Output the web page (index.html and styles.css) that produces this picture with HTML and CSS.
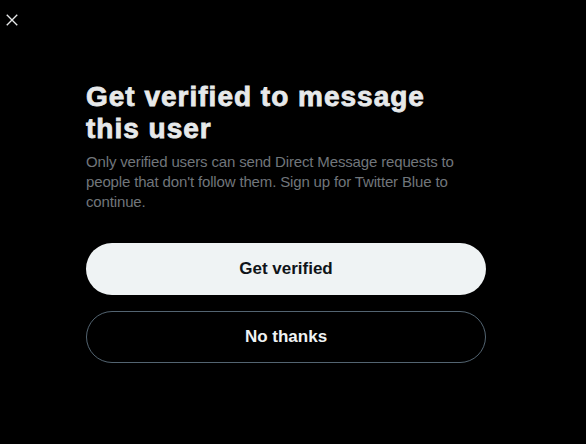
FILE: index.html
```html
<!DOCTYPE html>
<html>
<head>
<meta charset="utf-8">
<link rel="stylesheet" href="styles.css">
</head>
<body>
<div class="modal">
  <div class="topbar">
    <button class="close" aria-label="Close">
      <svg viewBox="0 0 24 24" width="14" height="14"><path d="M3 3 L21 21 M21 3 L3 21" stroke="#e7e9ea" stroke-width="2.4" fill="none"/></svg>
    </button>
  </div>
  <div class="content">
    <h1 class="title">Get verified to message this user</h1>
    <p class="desc">Only verified users can send Direct Message requests to people that don't follow them. Sign up for Twitter Blue to continue.</p>
    <div class="actions">
      <button class="btn primary">Get verified</button>
      <button class="btn secondary">No thanks</button>
    </div>
  </div>
</div>
</body>
</html>
```
FILE: styles.css
```css
html, body {
  margin: 0;
  padding: 0;
  background: #000;
  height: 100%;
}
body {
  font-family: "Liberation Sans", Arial, sans-serif;
  color: #e7e9ea;
}
.modal {
  width: 586px;
  height: 444px;
  background: #000;
}
.topbar {
  height: 40px;
  display: flex;
  align-items: center;
  padding-left: 5px;
}
.close {
  background: none;
  border: 0;
  padding: 0;
  width: 14px;
  height: 14px;
  display: flex;
  cursor: pointer;
}
.content {
  padding: 41px 100px 0 86px;
}
.title {
  margin: 0;
  font-size: 28px;
  line-height: 32px;
  font-weight: 800;
  width: 360px;
  letter-spacing: 1px;
  -webkit-text-stroke: 0.8px #e7e9ea;
  color: #e7e9ea;
}
.desc {
  margin: 7px 0 0;
  font-size: 15px;
  line-height: 20px;
  letter-spacing: -0.15px;
  color: #71767b;
  width: 390px;
}
.actions {
  display: flex;
  flex-direction: column;
  gap: 16px;
  margin-top: 31px;
}
.btn {
  height: 52px;
  width: 400px;
  border-radius: 26px;
  font-family: "Liberation Sans", Arial, sans-serif;
  font-size: 17px;
  font-weight: 700;
  cursor: pointer;
}
.primary {
  background: #eff3f4;
  color: #0f1419;
  border: 0;
}
.secondary {
  background: #000;
  color: #eff3f4;
  border: 1px solid #536471;
}
```
